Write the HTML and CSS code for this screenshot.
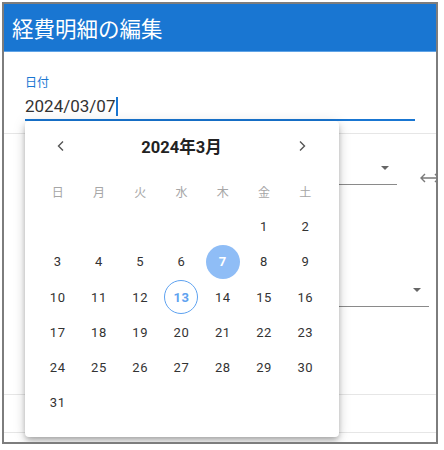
FILE: index.html
```html
<!DOCTYPE html>
<html lang="ja">
<head>
    <meta charset="UTF-8">
    <meta name="viewport" content="width=device-width, initial-scale=1.0">
    <title>経費明細の編集</title>
    <link rel="stylesheet" href="styles.css">
</head>
<body>

<div class="dialog">
    <div class="dialog-header">経費明細の編集</div>

    <div class="field-date">
        <div class="field-label">日付</div>
        <div class="field-value">2024/03/07<span class="caret"></span></div>
    </div>

    <div class="divider"></div>

    <div class="row row-category">
        <div class="select"><span class="select-arrow"></span></div>
        <svg class="swap-icon" width="20" height="12" viewBox="0 0 20 12">
            <path d="M1 6 H19 M5 2 L1 6 L5 10 M15 2 L19 6 L15 10" fill="none" stroke="#7a7a7a" stroke-width="1.4"/>
        </svg>
    </div>

    <div class="row row-payment">
        <div class="select select-tall"><span class="select-arrow"></span></div>
    </div>

    <div class="divider divider-low"></div>
    <div class="divider divider-last"></div>

    <!-- date picker popup -->
    <div class="picker">
        <div class="picker-head">
            <svg width="10" height="12" viewBox="0 0 10 12"><path d="M7 1.5 L2.5 6 L7 10.5" fill="none" stroke="#555" stroke-width="1.4"/></svg>
            <div class="picker-title">2024年3月</div>
            <svg width="10" height="12" viewBox="0 0 10 12"><path d="M3 1.5 L7.5 6 L3 10.5" fill="none" stroke="#555" stroke-width="1.4"/></svg>
        </div>
        <div class="calendar">
            <div class="wd">日</div><div class="wd">月</div><div class="wd">火</div><div class="wd">水</div><div class="wd">木</div><div class="wd">金</div><div class="wd">土</div>

            <div></div><div></div><div></div><div></div><div></div>
            <div class="day">1</div><div class="day">2</div>

            <div class="day">3</div><div class="day">4</div><div class="day">5</div><div class="day">6</div>
            <div class="day"><span class="selected">7</span></div>
            <div class="day">8</div><div class="day">9</div>

            <div class="day">10</div><div class="day">11</div><div class="day">12</div>
            <div class="day"><span class="today">13</span></div>
            <div class="day">14</div><div class="day">15</div><div class="day">16</div>

            <div class="day">17</div><div class="day">18</div><div class="day">19</div><div class="day">20</div>
            <div class="day">21</div><div class="day">22</div><div class="day">23</div>

            <div class="day">24</div><div class="day">25</div><div class="day">26</div><div class="day">27</div>
            <div class="day">28</div><div class="day">29</div><div class="day">30</div>

            <div class="day">31</div>
        </div>
    </div>
</div>

</body>
</html>
```

FILE: styles.css
```css
body {
    margin: 0;
    background-color: #fff;
    font-family: Roboto, "Noto Sans CJK JP", sans-serif;
    color: #333;
}

.dialog {
    position: relative;
    margin: 2px;
    width: 432px;
    height: 438px;
    border: 2px solid #7d7d7d;
    overflow: hidden;
    background-color: #fff;
}

.dialog-header {
    height: 47px;
    border-bottom: 1px solid #5fa3e6;
    background-color: #1976d2;
    color: #fff;
    font-family: "Noto Sans CJK JP", sans-serif;
    font-size: 21.5px;
    line-height: 47px;
    padding-left: 8px;
}

.field-date {
    margin: 22px 21px 0 21px;
    border-bottom: 2px solid #1976d2;
}

.field-label {
    font-family: "Noto Sans CJK JP", sans-serif;
    font-size: 12px;
    line-height: 16px;
    color: #1976d2;
}

.field-value {
    margin-top: 4px;
    font-size: 17px;
    line-height: 25px;
    color: #333;
}

.caret {
    display: inline-block;
    width: 1.5px;
    height: 19px;
    margin-left: 1px;
    vertical-align: -4px;
    background-color: #1976d2;
}

.divider {
    margin-top: 12px;
    height: 1px;
    background-color: #e6e6e6;
}

.divider-low {
    margin-top: 87px;
}

.divider-last {
    margin-top: 37px;
}

.row {
    display: flex;
    align-items: center;
    padding-left: 21px;
}

.select {
    flex: 1;
    height: 51px;
    display: flex;
    align-items: flex-end;
    justify-content: flex-end;
    padding: 0 8px 14px 0;
    box-sizing: border-box;
    border-bottom: 1px solid #8a8a8a;
}

.select-tall {
    height: 122px;
}

.row-payment {
    padding-right: 7px;
}

.select-arrow {
    width: 0;
    height: 0;
    border-left: 4px solid transparent;
    border-right: 4px solid transparent;
    border-top: 4px solid #666;
}

.swap-icon {
    flex: none;
    margin: 36px -4px 0 23px;
}

.picker {
    position: absolute;
    left: 21px;
    top: 117px;
    width: 314px;
    height: 316px;
    border-radius: 4px;
    background-color: #fff;
    box-shadow: 0 3px 5px -1px rgba(0, 0, 0, 0.2), 0 5px 8px rgba(0, 0, 0, 0.14), 0 1px 14px rgba(0, 0, 0, 0.12);
}

.picker-head {
    display: flex;
    align-items: center;
    justify-content: space-between;
    height: 24px;
    margin: 13px 0 16px 0;
    padding: 0 32px 0 31px;
}

.picker-title {
    font-size: 16.5px;
    font-weight: 700;
    color: #222;
}

.calendar {
    display: grid;
    grid-template-columns: repeat(7, 1fr);
    grid-auto-rows: 35.2px;
    padding: 0 13px 0 12px;
}

.wd {
    display: flex;
    align-items: center;
    justify-content: center;
    font-family: "Noto Sans CJK JP", sans-serif;
    font-size: 12px;
    color: #a6a6a6;
}

.day {
    display: flex;
    align-items: center;
    justify-content: center;
    font-size: 13px;
    font-weight: 400;
    letter-spacing: 0.6px;
    color: #333;
}

.selected,
.today {
    display: flex;
    align-items: center;
    justify-content: center;
    width: 34px;
    height: 34px;
    border-radius: 50%;
    box-sizing: border-box;
}

.selected {
    background-color: #8fbdf6;
    color: #fff;
    font-weight: 700;
}

.today {
    border: 1px solid #5ea2f0;
    color: #5ea2f0;
    font-weight: 700;
}
```
